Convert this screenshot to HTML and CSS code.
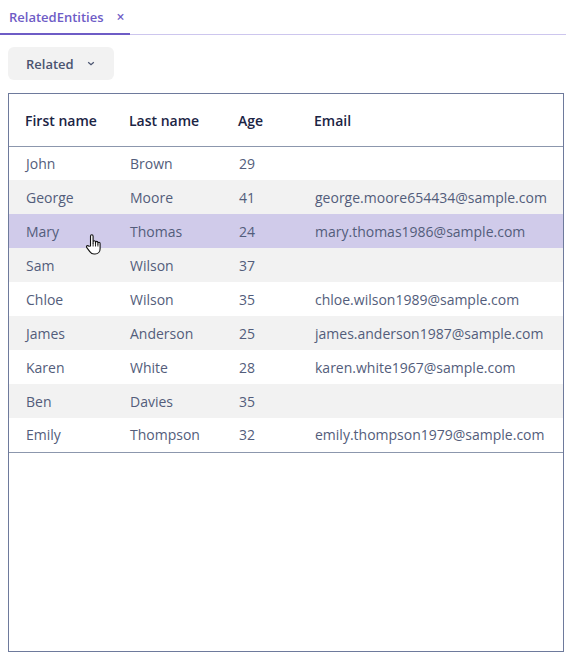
FILE: index.html
```html
<!DOCTYPE html>
<html>
<head>
<meta charset="utf-8">
<link rel="stylesheet" href="styles.css">
</head>
<body>
<div class="tabs">
  <div class="tab"><span class="tab-label">RelatedEntities</span><span class="tab-close">×</span></div>
</div>
<div class="toolbar">
  <button class="btn">Related
    <svg class="chev" width="8" height="5" viewBox="0 0 8 5"><path d="M1.2 1.2l2.8 2.6 2.8-2.6" fill="none" stroke="#4a5470" stroke-width="1.2"/></svg>
  </button>
</div>
<div class="grid-box">
  <table class="grid">
    <thead>
      <tr><th class="c1">First name</th><th class="c2">Last name</th><th class="c3">Age</th><th>Email</th></tr>
    </thead>
    <tbody>
      <tr><td>John</td><td>Brown</td><td>29</td><td></td></tr>
      <tr class="alt"><td>George</td><td>Moore</td><td>41</td><td>george.moore654434@sample.com</td></tr>
      <tr class="sel"><td>Mary<svg class="cursor" width="20" height="24" viewBox="0 0 20 24"><path d="M6.5 13V3.2c0-.9.6-1.5 1.3-1.5s1.3.6 1.3 1.5V10.5V9c0-.8.6-1.3 1.2-1.3s1.2.5 1.2 1.3v1.5-.8c0-.8.6-1.3 1.2-1.3s1.2.5 1.2 1.3v1.2-.5c0-.7.5-1.2 1.1-1.2s1.1.5 1.1 1.2v5.3c0 3-2 5.3-5 5.3H10c-2 0-3-.8-4.2-2.4L2.8 14.7c-.5-.7-.4-1.5.2-1.9s1.3-.2 1.8.4z" fill="#fff" stroke="#111" stroke-width="1.1" stroke-linejoin="round"/><path d="M9.1 10.5v3M11.5 10.5v3M13.9 11v2.5" stroke="#111" stroke-width="0.9"/></svg></td><td>Thomas</td><td>24</td><td>mary.thomas1986@sample.com</td></tr>
      <tr class="alt"><td>Sam</td><td>Wilson</td><td>37</td><td></td></tr>
      <tr><td>Chloe</td><td>Wilson</td><td>35</td><td>chloe.wilson1989@sample.com</td></tr>
      <tr class="alt"><td>James</td><td>Anderson</td><td>25</td><td>james.anderson1987@sample.com</td></tr>
      <tr><td>Karen</td><td>White</td><td>28</td><td>karen.white1967@sample.com</td></tr>
      <tr class="alt"><td>Ben</td><td>Davies</td><td>35</td><td></td></tr>
      <tr><td>Emily</td><td>Thompson</td><td>32</td><td>emily.thompson1979@sample.com</td></tr>
    </tbody>
  </table>
</div>
</body>
</html>
```
FILE: styles.css
```css
* { box-sizing: border-box; }
html, body { margin: 0; padding: 0; background: #fff; }
body {
  font-family: "Open Sans", "Noto Sans", sans-serif;
  width: 566px;
  height: 656px;
  overflow: hidden;
}
.tabs {
  display: flex;
  height: 35px;
  border-bottom: 1px solid #cdc6ee;
}
.tab {
  width: 130px;
  display: flex;
  align-items: center;
  padding: 0 0 0 9px;
  border-bottom: 2px solid #6e5cc6;
  margin-bottom: -1px;
  color: #6e5cc6;
  font-size: 13px;
  font-weight: 600;
}
.tab-close {
  margin-left: 13px;
  font-size: 14px;
  font-weight: 600;
}
.toolbar {
  padding: 12px 8px 0 8px;
}
.btn {
  display: flex;
  align-items: center;
  width: 106px;
  height: 33px;
  padding: 0 0 0 18px;
  border: none;
  border-radius: 6px;
  background: #f2f2f2;
  font-family: inherit;
  font-size: 13px;
  font-weight: 600;
  color: #4a5470;
}
.chev { margin-left: 13px; }
.grid-box {
  margin: 13px 2px 0 8px;
  height: 559px;
  border: 1px solid #6e7a9c;
}
.grid {
  width: 100%;
  border-collapse: collapse;
}
.grid th {
  height: 52px;
  text-align: left;
  font-size: 14px;
  font-weight: 600;
  color: #1b2444;
  padding: 2px 0 0 0;
  border-bottom: 1px solid #8c97ad;
}
.grid th:first-child, .grid td:first-child { padding-left: 16px; }
.grid th.c1 { width: 120px; }
.grid th.c2 { width: 109px; }
.grid th.c3 { width: 76px; }
.grid td {
  height: 34px;
  padding: 0 0 0 1px;
  font-size: 14px;
  color: #535d7b;
  white-space: nowrap;
}
.grid td:first-child { padding-left: 17px; position: relative; }
.grid tbody tr:last-child td { border-bottom: 1px solid #8c97ad; }
.grid tr.alt td { background: #f2f2f2; }
.grid tr.sel td { background: #d0cbea; }
.cursor {
  position: absolute;
  left: 75px;
  top: 19px;
  z-index: 2;
}
```
